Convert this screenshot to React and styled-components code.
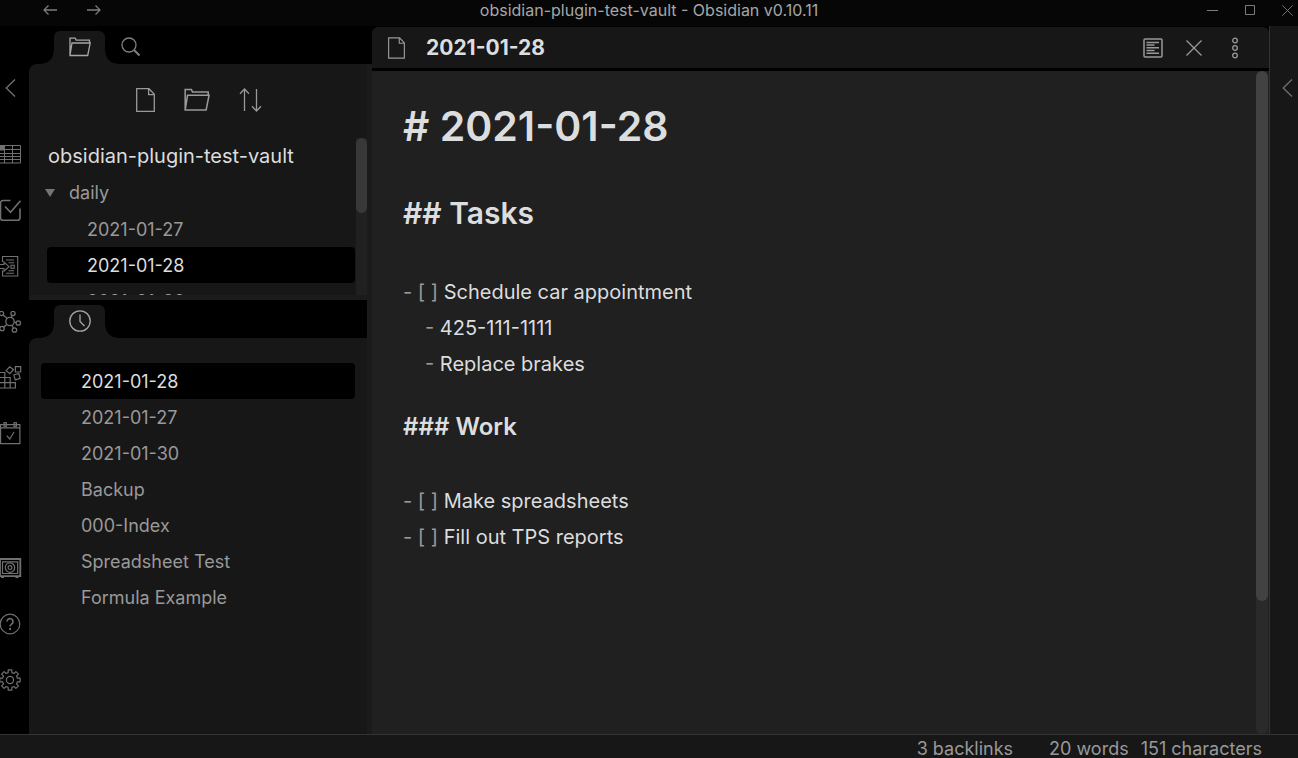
import React from 'react';
import styled, { createGlobalStyle, css } from 'styled-components';

const GlobalStyle = createGlobalStyle`
  *, *::before, *::after { box-sizing: border-box; }
  body { margin: 0; background: #000; }
  button { font: inherit; color: inherit; background: none; border: 0; padding: 0; cursor: pointer; }
  h1, h2, h3, p, ul { margin: 0; padding: 0; }
  ul { list-style: none; }
`;

/* ---------- icons ---------- */

const Svg = styled.svg`
  display: block;
  flex: none;
  fill: none;
  stroke: currentColor;
  stroke-width: ${(p) => p.$weight || 1.3};
  stroke-linejoin: ${(p) => p.$join || 'miter'};
`;

const Icon = ({ w, h, box, weight, join, children }) => (
  <Svg width={w} height={h} viewBox={box || `0 0 ${w} ${h}`} $weight={weight} $join={join} aria-hidden="true">
    {children}
  </Svg>
);

const FolderIcon = ({ w = 22, h = 20 }) => (
  <Icon w={w} h={h} box="0 0 22 20">
    <path d="M1 18.5V1.2h5.2l1 2h13.3v2.600M1 18.500 3 6h18.200l-2.500 12.500z" />
  </Icon>
);

const FileIcon = ({ w = 19, h = 24 }) => (
  <Icon w={w} h={h} box="0 0 19 24">
    <path d="M.7 .7h12.300l5.300 5.600v17H.7zM12.600 .7v6h5.700" />
  </Icon>
);

const SortIcon = () => (
  <Icon w={24} h={24}>
    <path d="M5.500 23V1M1 5.800 5.500 1l4.500 4.800M17.500 1v22M13 18.200l4.500 4.800 4.500-4.800" />
  </Icon>
);

const SearchIcon = () => (
  <Icon w={20} h={20}>
    <circle cx="8" cy="8" r="7" />
    <path d="m13 13 5.500 5.500" strokeWidth="2" />
  </Icon>
);

const ClockIcon = () => (
  <Icon w={22} h={22}>
    <circle cx="11" cy="11" r="10.2" />
    <path d="M11 4.500V11.500l4.500 4.500" />
  </Icon>
);

const ArrowIcon = ({ right }) => (
  <Icon w={14} h={10}>
    {right ? <path d="M0 5h13M8.500 .5 13 5 8.500 9.500" /> : <path d="M14 5H1M5.500 .5 1 5l4.500 4.500" />}
  </Icon>
);

const ChevronIcon = () => (
  <Icon w={11} h={20}>
    <path d="M10 1.500 1.200 10l8.800 8.500" />
  </Icon>
);

const TableIcon = () => (
  <Icon w={22} h={22} weight={1}>
    <path d="M0 2.500h20.500v17.500H0M0 6.500h20.500M0 10.500h20.500M0 13.500h20.500M0 16.500h20.500M4.500 2.500v17.500M12.500 2.500v17.500" />
    <path d="M0 3h4v4H0z" fill="currentColor" />
  </Icon>
);

const CheckIcon = () => (
  <Icon w={22} h={22} weight={1.6}>
    <path d="M10.500 1.500H3a2.500 2.500 0 0 0-2.500 2.500v15a2.500 2.500 0 0 0 2.500 2.300h14.500a2.500 2.500 0 0 0 2.500-2.500V9.500M5 7.500l5.500 5.800L20.500 1.800" />
  </Icon>
);

const ImportIcon = () => (
  <Icon w={22} h={22} weight={1.1}>
    <path d="M2.500 7V1.500h15.200v19.500H2.500V15.500M0 9.500h4V7l5 4.700-5 4.500v-2.700H0M6 5h8M8.500 7.800H14M11 10.200h3.200v3H11zM8.500 15.800H14M6 18.200h8" />
  </Icon>
);

const GraphIcon = () => (
  <Icon w={22} h={22} weight={1.3}>
    <circle cx="10" cy="10.5" r="4.2" />
    <circle cx="13" cy="2.5" r="2.1" />
    <circle cx="18.3" cy="12" r="2.2" />
    <circle cx="14.5" cy="19" r="2.2" />
    <circle cx="2" cy="17.500" r="2.2" />
    <circle cx="1.500" cy="2.500" r="2.1" />
    <path d="M11.300 6.500l.8-2M14.200 11.200l2 .4M12 14.300l1.300 2.600M6.800 13.500 3.800 16M7 7.300 3.300 4.200" />
  </Icon>
);

const BlocksIcon = () => (
  <Icon w={22} h={24} weight={1.2}>
    <path d="M0 6.500h4.800v15.500M0 11.500h10.200v10.500M0 16.700h15.400v5.300H0M15.400 .7h5.300v5.300h-5.300z" />
    <path d="m9.700 .8 3.800 2.900-3.600 4-3.800-3zM13.800 9l4.900-1.500 1.500 4.900-4.900 1.500z" />
  </Icon>
);

const CalendarIcon = () => (
  <Icon w={22} h={24} weight={1.2}>
    <path d="M.6 2.700h19.300v19H.6zM.6 5.900h19.300M6.800 13.700l3 3.300 4.200-7" />
    <rect x="4" y=".7" width="2.4" height="3.6" />
    <rect x="14" y=".7" width="2.4" height="3.6" />
  </Icon>
);

const VaultIcon = () => (
  <Icon w={22} h={22} weight={1.2}>
    <path d="M0 2h20.300v17.200H0z" strokeWidth="1.8" />
    <path d="M2.500 4.800h15.200v11.700H2.500zM1 20.500h3M15.500 20.500h3" />
    <circle cx="10" cy="10.6" r="4.7" />
    <circle cx="10" cy="10.6" r="1.9" />
  </Icon>
);

const HelpIcon = () => (
  <Icon w={22} h={22} weight={1.2}>
    <circle cx="10" cy="11" r="9.8" />
    <path d="M7 8.600a3 3 0 1 1 4.600 2.500c-1 .7-1.500 1.100-1.500 2.500" strokeWidth="1.6" />
    <path d="M10.100 15v2" strokeWidth="1.8" />
  </Icon>
);

const teeth = Array.from({ length: 8 }, (_, i) => {
  const at = (deg, r) => {
    const a = ((i * 45 + deg) * Math.PI) / 180;
    return `${(10 + r * Math.sin(a)).toFixed(2)} ${(11 - r * Math.cos(a)).toFixed(2)}`;
  };
  return `${i ? 'L' : 'M'}${at(-14, 7.6)}L${at(-10, 10.3)}L${at(10, 10.3)}L${at(14, 7.6)}`;
}).join('');

const GearIcon = () => (
  <Icon w={22} h={22} weight={1.2} join="round">
    <path d={`${teeth}Z`} />
    <circle cx="10" cy="11" r="3.6" />
  </Icon>
);

const PreviewIcon = () => (
  <Icon w={20} h={20}>
    <rect x="1" y="1" width="18" height="18" rx="1" strokeWidth="1.5" />
    <path d="M3.500 4.500h12.500M3.500 7h8M3.500 9.800h12.500M3.500 12.500h8M3.500 15.300h12.500" strokeWidth="1.4" />
  </Icon>
);

const CrossIcon = ({ size = 16 }) => (
  <Icon w={size} h={size} box="0 0 16 16">
    <path d="M.5 .5l15 15M15.500 .5l-15 15" />
  </Icon>
);

const DotsIcon = () => (
  <Icon w={8} h={22}>
    <circle cx="4" cy="3.5" r="2.3" />
    <circle cx="4" cy="11" r="2.3" />
    <circle cx="4" cy="18.5" r="2.3" />
  </Icon>
);

/* ---------- frame ---------- */

const Window = styled.div`
  display: flex;
  flex-direction: column;
  height: 100vh;
  overflow: hidden;
  background: #000;
  color: #dcddde;
  font: 18px/36px Inter, sans-serif;
`;

const TitleBar = styled.header`
  display: grid;
  grid-template-columns: 1fr auto 1fr;
  align-items: center;
  flex: none;
  height: 26px;
  padding: 0 5px 6px 43px;
  background: #060606;
  color: #7c7c7c;
`;

const TitleGroup = styled.div`
  display: flex;
  align-items: center;
  gap: ${(p) => p.$gap}px;
  justify-content: ${(p) => (p.$end ? 'flex-end' : 'flex-start')};
`;

const WindowTitle = styled.div`
  font-size: 16px;
  line-height: 20px;
  color: #a6a6a6;
  padding-right: 38px;
`;

const Workspace = styled.div`
  display: flex;
  flex: 1;
  min-height: 0;
`;

const IconButton = styled.button`
  display: flex;
  align-items: center;
  justify-content: center;
`;

const Ribbon = styled.nav`
  display: flex;
  flex-direction: column;
  flex: none;
  width: 29px;
  padding: 52px 0 26px;
  color: #707070;
  ${(p) =>
    p.$right &&
    css`
      background: #171717;
      border-left: 1px solid #333;
      padding-left: 12px;
    `}
`;

const RibbonToggle = styled.button`
  display: flex;
  padding-left: ${(p) => (p.$flush ? 0 : 5)}px;
  margin-bottom: 28px;
`;

const RibbonButton = styled.button`
  display: flex;
  align-items: center;
  height: 56px;
`;

const Spacer = styled.div`
  flex: 1;
`;

/* ---------- sidebar ---------- */

const Sidebar = styled.aside`
  display: flex;
  flex-direction: column;
  flex: none;
  width: 338px;
`;

const TabBar = styled.div`
  display: flex;
  align-items: flex-end;
  flex: none;
  height: 38px;
  padding-left: 25px;
`;

const Tab = styled.button`
  position: relative;
  display: flex;
  align-items: center;
  justify-content: center;
  width: 51px;
  height: 33px;
  padding-bottom: 2px;
  color: ${(p) => (p.$active ? '#a6a6a6' : '#808080')};
  ${(p) =>
    p.$active &&
    css`
      background: #171717;
      border-radius: 6px 6px 0 0;
      &::before,
      &::after {
        content: '';
        position: absolute;
        bottom: 0;
        width: 12px;
        height: 12px;
      }
      &::before {
        right: 100%;
        background: radial-gradient(circle at 0 0, transparent 11px, #171717 12px);
      }
      &::after {
        left: 100%;
        background: radial-gradient(circle at 100% 0, transparent 11px, #171717 12px);
      }
    `}
`;

const Panel = styled.section`
  display: flex;
  flex-direction: column;
  background: #171717;
  border-radius: 8px 0 0 0;
  min-height: 0;
  ${(p) => (p.$grow ? 'flex: 1; padding: 25px 12px 0;' : 'flex: none; height: 231px;')}
`;

const NavButtons = styled.div`
  display: flex;
  align-items: center;
  justify-content: center;
  gap: 29px;
  flex: none;
  height: 74px;
  padding: 0 0 2px 2px;
  color: #999;
`;

const Scroller = styled.div`
  display: flex;
  flex: 1;
  min-height: 0;
  overflow: hidden;
`;

const Tree = styled.div`
  flex: 1;
  padding-left: 18px;
`;

const VaultName = styled.h2`
  font-size: 20px;
  font-weight: 400;
  line-height: 36px;
  padding-left: 1px;
`;

const FolderRow = styled.button`
  display: flex;
  align-items: center;
  gap: 14px;
  width: 100%;
  height: 37px;
  color: #999;
  svg { margin-left: -2px; }
`;

const FileRow = styled.button`
  display: block;
  width: 100%;
  height: 36px;
  padding: 2px 0 0 40px;
  border-radius: 4px;
  text-align: left;
  line-height: 34px;
  color: ${(p) => (p.$active ? '#dcddde' : '#999')};
  background: ${(p) => (p.$active ? '#000' : 'none')};
`;

const FileList = styled.ul`
  margin-right: ${(p) => p.$gutter || 0}px;
`;

const Track = styled.div`
  flex: none;
  width: ${(p) => p.$size}px;
  border-radius: ${(p) => p.$radius || 0}px;
  background: ${(p) => p.$color};
`;

const Thumb = styled.div`
  height: ${(p) => p.$length};
  border-radius: 6px;
  background: ${(p) => p.$color};
`;

const RowHandle = styled.div`
  flex: none;
  height: 5px;
  background: #1b1b1b;
`;

const ColumnHandle = styled.div`
  flex: none;
  width: 5px;
  margin-top: 38px;
  background: #1b1b1b;
`;

/* ---------- editor ---------- */

const Main = styled.main`
  display: flex;
  flex-direction: column;
  flex: 1;
  min-width: 0;
  padding-top: 1px;
`;

const ViewHeader = styled.div`
  display: flex;
  align-items: center;
  flex: none;
  height: 41px;
  padding: 0 21px 0 16px;
  background: #171717;
  border-radius: 6px 6px 0 0;
  color: #999;
`;

const ViewTitle = styled.div`
  flex: 1;
  padding-left: 21px;
  font-size: 21px;
  font-weight: 700;
  color: #dcddde;
`;

const ViewActions = styled.div`
  display: grid;
  grid-template-columns: repeat(3, 26px);
  gap: 15px;
`;

const EditorScroll = styled.div`
  display: flex;
  flex: 1;
  min-height: 0;
  margin-top: 3px;
  padding-right: 1px;
  background: #202020;
`;

const Editor = styled.article`
  flex: 1;
  padding: 25px 31px;
  font-size: 20px;
`;

const Heading1 = styled.h1`
  font-size: 41px;
  font-weight: 600;
  line-height: 60px;
`;

const Heading2 = styled.h2`
  font-size: 30px;
  font-weight: 600;
  line-height: 46px;
  margin: 34px 0 38px;
`;

const Heading3 = styled.h3`
  font-size: 24px;
  font-weight: 600;
  line-height: 36px;
  margin: 27px 0 38px;
`;

const Line = styled.p`
  padding-left: ${(p) => (p.$nested ? 22 : 0)}px;
`;

const Mark = styled.span`
  color: #999;
`;

const StatusBar = styled.footer`
  display: flex;
  justify-content: flex-end;
  flex: none;
  height: 24px;
  padding-right: 36px;
  border-top: 1px solid #333;
  background: #171717;
  color: #999;
  line-height: 27px;
  overflow: hidden;
`;

const Status = styled.span`
  margin-left: ${(p) => p.$gap}px;
`;

const recent = ['2021-01-28', '2021-01-27', '2021-01-30', 'Backup', '000-Index', 'Spreadsheet Test', 'Formula Example'];

const ribbonTop = [
  ['Table', TableIcon],
  ['Tasks', CheckIcon],
  ['Import', ImportIcon],
  ['Open graph view', GraphIcon],
  ['Blocks', BlocksIcon],
  ['Open today’s note', CalendarIcon],
];

const ribbonBottom = [
  ['Open another vault', VaultIcon],
  ['Help', HelpIcon],
  ['Settings', GearIcon],
];

const RibbonGroup = ({ items }) =>
  items.map(([label, Glyph]) => (
    <RibbonButton key={label} aria-label={label}>
      <Glyph />
    </RibbonButton>
  ));

export default function App() {
  return (
    <>
      <GlobalStyle />
      <Window>
        <TitleBar>
          <TitleGroup $gap={30}>
            <IconButton aria-label="Back"><ArrowIcon /></IconButton>
            <IconButton aria-label="Forward"><ArrowIcon right /></IconButton>
          </TitleGroup>
          <WindowTitle>obsidian-plugin-test-vault - Obsidian v0.10.11</WindowTitle>
          <TitleGroup $gap={27} $end>
            <IconButton aria-label="Minimize">
              <Icon w={11} h={11} weight={1}><path d="M0 5.500h11" /></Icon>
            </IconButton>
            <IconButton aria-label="Maximize">
              <Icon w={10} h={10} weight={1}><path d="M.5 .5h9v9h-9z" /></Icon>
            </IconButton>
            <IconButton aria-label="Close window"><CrossIcon size={11} /></IconButton>
          </TitleGroup>
        </TitleBar>

        <Workspace>
          <Ribbon aria-label="Ribbon">
            <RibbonToggle aria-label="Collapse left sidebar"><ChevronIcon /></RibbonToggle>
            <RibbonGroup items={ribbonTop} />
            <Spacer />
            <RibbonGroup items={ribbonBottom} />
          </Ribbon>

          <Sidebar>
            <TabBar>
              <Tab $active aria-label="File explorer"><FolderIcon /></Tab>
              <Tab aria-label="Search"><SearchIcon /></Tab>
            </TabBar>
            <Panel>
              <NavButtons>
                <IconButton aria-label="New note"><FileIcon /></IconButton>
                <IconButton aria-label="New folder"><FolderIcon w={26} h={24} /></IconButton>
                <IconButton aria-label="Change sort order"><SortIcon /></IconButton>
              </NavButtons>
              <Scroller>
                <Tree>
                  <VaultName>obsidian-plugin-test-vault</VaultName>
                  <FolderRow>
                    <Icon w={10} h={8}><path d="M0 0h10L5 8z" fill="#757575" stroke="none" /></Icon>
                    daily
                  </FolderRow>
                  <FileList $gutter={1}>
                    <li><FileRow>2021-01-27</FileRow></li>
                    <li><FileRow $active>2021-01-28</FileRow></li>
                    <li><FileRow>2021-01-30</FileRow></li>
                  </FileList>
                </Tree>
                <Track $size={11} $color="#202020">
                  <Thumb $length="75px" $color="#383838" />
                </Track>
              </Scroller>
            </Panel>
            <RowHandle />
            <TabBar>
              <Tab $active aria-label="Recent files"><ClockIcon /></Tab>
            </TabBar>
            <Panel $grow>
              <FileList>
                {recent.map((name, i) => (
                  <li key={name}><FileRow $active={i === 0}>{name}</FileRow></li>
                ))}
              </FileList>
            </Panel>
          </Sidebar>
          <ColumnHandle />

          <Main>
            <ViewHeader>
              <FileIcon w={17} h={22} />
              <ViewTitle>2021-01-28</ViewTitle>
              <ViewActions>
                <IconButton aria-label="Preview"><PreviewIcon /></IconButton>
                <IconButton aria-label="Close"><CrossIcon /></IconButton>
                <IconButton aria-label="More options"><DotsIcon /></IconButton>
              </ViewActions>
            </ViewHeader>
            <EditorScroll>
              <Editor>
                <Heading1># 2021-01-28</Heading1>
                <Heading2>## Tasks</Heading2>
                <Line><Mark>- [ ]</Mark> Schedule car appointment</Line>
                <Line $nested><Mark>-</Mark> 425-111-1111</Line>
                <Line $nested><Mark>-</Mark> Replace brakes</Line>
                <Heading3>### Work</Heading3>
                <Line><Mark>- [ ]</Mark> Make spreadsheets</Line>
                <Line><Mark>- [ ]</Mark> Fill out TPS reports</Line>
              </Editor>
              <Track $size={12} $radius={6} $color="#2a2a2a">
                <Thumb $length="80%" $color="#424242" />
              </Track>
            </EditorScroll>
          </Main>

          <Ribbon $right aria-label="Right ribbon">
            <RibbonToggle $flush aria-label="Expand right sidebar"><ChevronIcon /></RibbonToggle>
          </Ribbon>
        </Workspace>

        <StatusBar>
          <Status $gap={0}>3 backlinks</Status>
          <Status $gap={36}>20 words</Status>
          <Status $gap={12}>151 characters</Status>
        </StatusBar>
      </Window>
    </>
  );
}
